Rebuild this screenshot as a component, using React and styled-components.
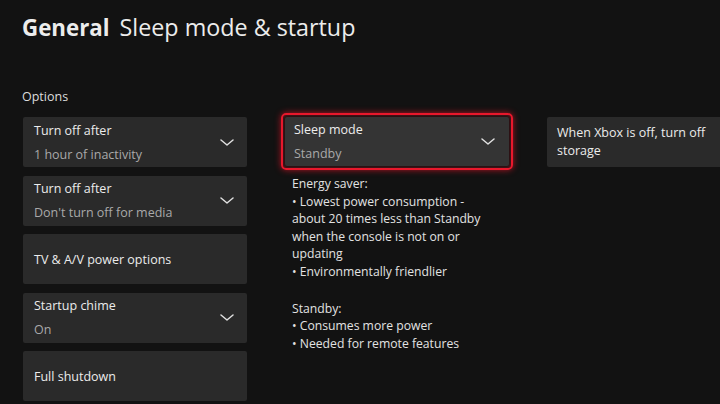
import React from "react";
import styled, { createGlobalStyle } from "styled-components";

const Global = createGlobalStyle`
  html, body {
    margin: 0;
    padding: 0;
    background: #121212;
  }
  body {
    font-family: "Open Sans", "Noto Sans", sans-serif;
    color: #e8e8e8;
    width: 720px;
    height: 404px;
    overflow: hidden;
  }
`;

const Page = styled.div`
  width: 720px;
  height: 404px;
  padding: 11px 0 0 22px;
  box-sizing: border-box;
  overflow: hidden;
`;

const Header = styled.h1`
  margin: 0;
  font-size: 23.3px;
  font-weight: 400;
  line-height: 32px;
  color: #ececec;
  display: flex;
  align-items: baseline;
  gap: 10px;
  b {
    font-size: 22.3px;
    font-weight: 700;
  }
`;

const SectionLabel = styled.div`
  margin-top: 45px;
  font-size: 12.5px;
  line-height: 16px;
  color: #dcdcdc;
`;

const Columns = styled.div`
  margin-top: 12px;
  display: grid;
  grid-template-columns: 225px 232px 200px;
  column-gap: 34px;
  align-items: start;
`;

const Stack = styled.div`
  display: flex;
  flex-direction: column;
  gap: 8.5px;
  margin-left: 1px;
`;

const Card = styled.div`
  height: 50px;
  background: #2a2a2a;
  border-radius: 2px;
  display: flex;
  align-items: center;
  justify-content: space-between;
  padding: 0 13px 0 11px;
  box-sizing: border-box;
`;

const FocusFrame = styled.div`
  margin-top: -4px;
  padding: 2px;
  border: 2.5px solid #e8182c;
  border-radius: 5px;
  box-shadow: 0 0 6px rgba(230, 20, 40, 0.75), inset 0 0 4px rgba(230, 20, 40, 0.5);
  ${Card} {
    height: 49px;
    background: #343434;
    padding-left: 9px;
    padding-right: 14px;
  }
`;

const Texts = styled.div`
  display: flex;
  flex-direction: column;
  gap: 5px;
`;

const Title = styled.div`
  font-size: 12.5px;
  line-height: 19px;
  color: #ececec;
`;

const Value = styled.div`
  font-size: 12.5px;
  line-height: 19px;
  color: #a9a9a9;
`;

const WideText = styled.div`
  max-width: 160px;
  font-size: 12.5px;
  line-height: 18px;
  color: #ececec;
`;

const Description = styled.div`
  width: 204px;
  padding: 5px 0 0 11px;
  font-size: 12.2px;
  line-height: 17.5px;
  color: #e2e2e2;
  p {
    margin: 0 0 19.5px;
  }
`;

const RightCard = styled(Card)`
  width: 200px;
  padding-left: 10px;
  justify-content: flex-start;
`;

function Chevron() {
  return (
    <svg width="14" height="7" viewBox="0 0 14 7" fill="none">
      <path d="M1 1 L7 6 L13 1" stroke="#e0e0e0" strokeWidth="1.5" strokeLinecap="round" strokeLinejoin="round" />
    </svg>
  );
}

function Option({ title, value }) {
  return (
    <Card>
      <Texts>
        <Title>{title}</Title>
        {value && <Value>{value}</Value>}
      </Texts>
      {value && <Chevron />}
    </Card>
  );
}

export default function App() {
  return (
    <Page>
      <Global />
      <Header>
        <b>General</b>
        <span>Sleep mode &amp; startup</span>
      </Header>
      <SectionLabel>Options</SectionLabel>
      <Columns>
        <Stack>
          <Option title="Turn off after" value="1 hour of inactivity" />
          <Option title="Turn off after" value="Don't turn off for media" />
          <Option title="TV & A/V power options" />
          <Option title="Startup chime" value="On" />
          <Option title="Full shutdown" />
        </Stack>
        <div>
          <FocusFrame>
            <Option title="Sleep mode" value="Standby" />
          </FocusFrame>
          <Description>
            <p>
              Energy saver:
              <br />• Lowest power consumption - about 20 times less than Standby when the console is not on or updating
              <br />• Environmentally friendlier
            </p>
            <p>
              Standby:
              <br />• Consumes more power
              <br />• Needed for remote features
            </p>
          </Description>
        </div>
        <RightCard>
          <WideText>When Xbox is off, turn off storage</WideText>
        </RightCard>
      </Columns>
    </Page>
  );
}
